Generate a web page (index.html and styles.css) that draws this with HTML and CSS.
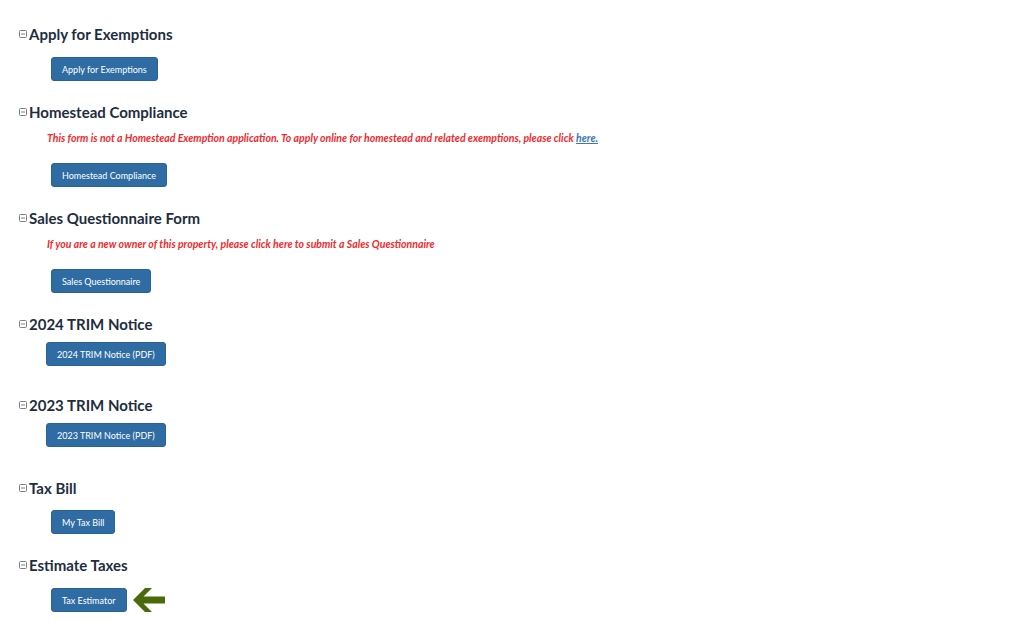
FILE: index.html
```html
<!DOCTYPE html>
<html>
<head>
<meta charset="utf-8">
<link rel="stylesheet" href="styles.css">
</head>
<body>
<div class="page">
  <section class="section">
    <h3 class="heading"><svg class="toggle" viewBox="0 0 8 8" width="8" height="8"><rect x="0.5" y="0.5" width="7" height="7" rx="1" fill="none" stroke="#7a7f86"/><path d="M2 4H6" stroke="#7a7f86"/></svg>Apply for Exemptions</h3>
    <div class="actions"><a class="btn">Apply for Exemptions</a></div>
  </section>
  <section class="section">
    <h3 class="heading"><svg class="toggle" viewBox="0 0 8 8" width="8" height="8"><rect x="0.5" y="0.5" width="7" height="7" rx="1" fill="none" stroke="#7a7f86"/><path d="M2 4H6" stroke="#7a7f86"/></svg>Homestead Compliance</h3>
    <p class="note">This form is not a Homestead Exemption application. To apply online for homestead and related exemptions, please click <a class="link">here.</a></p>
    <div class="actions after-note"><a class="btn">Homestead Compliance</a></div>
  </section>
  <section class="section">
    <h3 class="heading"><svg class="toggle" viewBox="0 0 8 8" width="8" height="8"><rect x="0.5" y="0.5" width="7" height="7" rx="1" fill="none" stroke="#7a7f86"/><path d="M2 4H6" stroke="#7a7f86"/></svg>Sales Questionnaire Form</h3>
    <p class="note">If you are a new owner of this property, please click here to submit a Sales Questionnaire</p>
    <div class="actions after-note"><a class="btn">Sales Questionnaire</a></div>
  </section>
  <section class="section trim">
    <h3 class="heading"><svg class="toggle" viewBox="0 0 8 8" width="8" height="8"><rect x="0.5" y="0.5" width="7" height="7" rx="1" fill="none" stroke="#7a7f86"/><path d="M2 4H6" stroke="#7a7f86"/></svg>2024 TRIM Notice</h3>
    <div class="actions"><a class="btn">2024 TRIM Notice (PDF)</a></div>
  </section>
  <section class="section trim">
    <h3 class="heading"><svg class="toggle" viewBox="0 0 8 8" width="8" height="8"><rect x="0.5" y="0.5" width="7" height="7" rx="1" fill="none" stroke="#7a7f86"/><path d="M2 4H6" stroke="#7a7f86"/></svg>2023 TRIM Notice</h3>
    <div class="actions"><a class="btn">2023 TRIM Notice (PDF)</a></div>
  </section>
  <section class="section bill">
    <h3 class="heading"><svg class="toggle" viewBox="0 0 8 8" width="8" height="8"><rect x="0.5" y="0.5" width="7" height="7" rx="1" fill="none" stroke="#7a7f86"/><path d="M2 4H6" stroke="#7a7f86"/></svg>Tax Bill</h3>
    <div class="actions"><a class="btn">My Tax Bill</a></div>
  </section>
  <section class="section">
    <h3 class="heading"><svg class="toggle" viewBox="0 0 8 8" width="8" height="8"><rect x="0.5" y="0.5" width="7" height="7" rx="1" fill="none" stroke="#7a7f86"/><path d="M2 4H6" stroke="#7a7f86"/></svg>Estimate Taxes</h3>
    <div class="actions"><a class="btn">Tax Estimator</a><svg class="arrow" viewBox="0 0 32 24" width="32" height="24"><path d="M0 12 L12 0 H19 L10.5 8.5 H32 V15.5 H10.5 L19 24 H12 Z" fill="#4a6a0c"/></svg></div>
  </section>
</div>
</body>
</html>
```
FILE: styles.css
```css
* { box-sizing: border-box; }
html, body { margin: 0; padding: 0; background: #ffffff; }
body { font-family: Lato, "Open Sans", "Liberation Sans", sans-serif; }
.page { padding: 24px 0 0 19px; }
.section { margin: 0 0 21px 0; }
.heading {
  margin: 0;
  height: 20px;
  line-height: 20px;
  font-size: 15px;
  font-weight: 700;
  color: #1e2d40;
  display: flex;
  align-items: center;
}
.toggle { margin-right: 2px; flex: none; }
.note {
  margin: 9px 0 0 28px;
  line-height: 14px;
  font-size: 10.5px;
  font-weight: 700;
  font-style: italic;
  color: #f02a2d;
}
.link { color: #3a77b5; text-decoration: underline; }
.actions {
  margin: 13px 0 0 32px;
  display: flex;
  align-items: center;
  gap: 6px;
}
.actions.after-note { margin-top: 18px; }
.trim { margin-bottom: 29px; }
.trim .actions { margin: 8px 0 0 27px; }
.bill { padding-top: 2px; }
.bill .actions { margin-top: 12px; }
.btn {
  display: inline-flex;
  align-items: center;
  height: 24px;
  padding: 0 10px;
  background: #2f6ca3;
  border: 1px solid #2a6196;
  border-radius: 3px;
  color: #ffffff;
  font-size: 9px;
  font-weight: 400;
  white-space: nowrap;
}
.arrow { flex: none; }
```
